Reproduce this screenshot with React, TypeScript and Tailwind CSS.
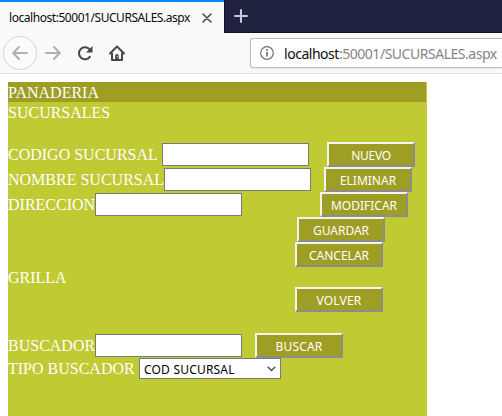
import React from 'react';

function Field({ label, labelClass }: { label: string; labelClass: string }) {
  return (
    <>
      <label className={`shrink-0 whitespace-nowrap ${labelClass}`}>{label}</label>
      <input aria-label={label} className="h-[23px] w-[147px] shrink-0 border border-[#7a7a7a] bg-white px-1 text-black outline-none" />
    </>
  );
}

function Action({ text, className, textClass }: { text: string; className: string; textClass: string }) {
  return (
    <button
      className={`flex h-[25px] w-[88px] shrink-0 items-center justify-center border-2 border-t-[#f4f4ee] border-r-[#8c8c8c] border-b-[#8c8c8c] border-l-[#f4f4ee] bg-[#9f9e24] pt-[3px] font-['Noto_Sans',sans-serif] text-[12px] leading-none text-white ${className}`}
    >
      <span className={`whitespace-nowrap ${textClass}`}>{text}</span>
    </button>
  );
}

function BrowserChrome() {
  return (
    <header className="font-['Noto_Sans','Open_Sans',sans-serif]">
      <div className="flex h-[33px] bg-[#202340]">
        <div className="flex w-[224px] shrink-0 items-center border-t-2 border-[#0a84ff] bg-[#f9f9fa] pl-[9px] text-[12px] text-[#0c0c0d]">
          <span className="w-[182px] shrink-0 whitespace-nowrap tracking-[-0.45px]">localhost:50001/SUCURSALES.aspx</span>
          <svg className="ml-[11px] shrink-0" width="10" height="10" viewBox="0 0 10 10" fill="none" stroke="#4a4a4f" strokeWidth="1.6" strokeLinecap="round">
            <path d="M1 1l8 8M9 1L1 9" />
          </svg>
        </div>
        <div className="flex flex-1 items-center border-b border-l border-[#11132a] pl-[9px]">
          <svg width="14" height="14" viewBox="0 0 14 14" fill="none" stroke="#c9c9d0" strokeWidth="2" strokeLinecap="round">
            <path d="M7 1v12M1 7h12" />
          </svg>
        </div>
      </div>
      <div className="flex h-[41px] items-center border-b border-[#dfdfe1] bg-[#f9f9fa]">
        <div className="ml-[3px] flex h-[34px] w-[34px] shrink-0 items-center justify-center rounded-full border border-[#d6d6d8] bg-[#fbfbfb]">
          <svg width="16" height="16" viewBox="0 0 16 16" fill="none" stroke="#b1b1b3" strokeWidth="2" strokeLinecap="round" strokeLinejoin="round">
            <path d="M15 8H1.5M7 2L1.2 8L7 14" />
          </svg>
        </div>
        <svg className="ml-[8px] shrink-0" width="16" height="16" viewBox="0 0 16 16" fill="none" stroke="#b1b1b3" strokeWidth="2" strokeLinecap="round" strokeLinejoin="round">
          <path d="M1 8h13.5M9 2l5.8 6L9 14" />
        </svg>
        <svg className="ml-[16px] shrink-0" width="16" height="16" viewBox="0 0 16 16" fill="none" stroke="#47474b" strokeWidth="2" strokeLinecap="round">
          <path d="M12.8 11.8A6 6 0 1 1 12.6 4.4" />
          <path d="M15.5 1v6.5H9z" fill="#47474b" stroke="none" />
        </svg>
        <svg className="ml-[16px] shrink-0" width="16" height="16" viewBox="0 0 16 16" fill="none" stroke="#47474b" strokeWidth="2" strokeLinecap="round" strokeLinejoin="round">
          <path d="M1 8.5l7-7l7 7M3 8.5V15h10V8.5" />
          <path d="M6.2 15v-4.2a1.8 1.8 0 0 1 3.6 0V15z" fill="#47474b" stroke="none" />
          <path d="M8.3 11.8h.3" stroke="#f9f9fa" strokeWidth="1" />
        </svg>
        <div className="ml-[125px] flex h-[30px] min-w-0 flex-1 items-center rounded-l-[3px] border border-r-0 border-[#bdbdbf] bg-white pl-[9px] shadow-[0_1px_2px_rgba(0,0,0,0.06)]">
          <svg className="shrink-0" width="14" height="14" viewBox="0 0 14 14" fill="none" stroke="#737373" strokeWidth="1.2">
            <circle cx="7" cy="7" r="6.3" />
            <path d="M7 6v4.5M7 3v1.7" strokeWidth="1.7" />
          </svg>
          <span className="ml-[10px] whitespace-nowrap pt-px text-[14px] tracking-[-0.47px] text-[#858588]">
            <span className="text-[#0c0c0d]">localhost</span>:50001/SUCURSALES.aspx
          </span>
        </div>
      </div>
    </header>
  );
}

export default function App() {
  return (
    <div className="h-[416px] w-[502px] overflow-hidden bg-white">
      <BrowserChrome />
      <main className="ml-[8px] mt-[8px] h-[334px] w-[419px] bg-[#c0ca33] font-['Liberation_Serif',serif] text-[16px] leading-[20px] text-white">
        <h1 className="h-[20px] w-[418px] bg-[#9f9e24] pt-px">PANADERIA</h1>
        <h2 className="h-[40px] pt-px">SUCURSALES</h2>
        <div className="flex h-[25px] items-center">
          <Field label="CODIGO SUCURSAL" labelClass="w-[154px]" />
          <Action text="NUEVO" className="ml-[18px]" textClass="tracking-[-0.3px]" />
        </div>
        <div className="flex h-[25px] items-center">
          <Field label="NOMBRE SUCURSAL" labelClass="w-[156px]" />
          <Action text="ELIMINAR" className="ml-[13px]" textClass="" />
        </div>
        <div className="flex h-[25px] items-center">
          <Field label="DIRECCION" labelClass="w-[87px]" />
          <Action text="MODIFICAR" className="ml-[78px]" textClass="" />
        </div>
        <Action text="GUARDAR" className="ml-[289px]" textClass="" />
        <Action text="CANCELAR" className="ml-[287px]" textClass="" />
        <h3 className="h-[20px] pt-px">GRILLA</h3>
        <Action text="VOLVER" className="ml-[287px]" textClass="tracking-[0.2px]" />
        <div className="mt-[21px] flex h-[25px] items-center">
          <Field label="BUSCADOR" labelClass="w-[87px]" />
          <Action text="BUSCAR" className="ml-[13px]" textClass="tracking-[0.2px]" />
        </div>
        <div className="flex h-[21px] items-center">
          <span className="w-[131px] whitespace-nowrap">TIPO BUSCADOR</span>
          <button className="flex h-[21px] w-[142px] items-center justify-between border border-[#7a7a7a] bg-white pl-[4px] pr-[4px] font-['Noto_Sans',sans-serif] text-[12px] leading-none text-black">
            <span className="whitespace-nowrap pt-[2px] tracking-[0.2px]">COD SUCURSAL</span>
            <svg width="9" height="6" viewBox="0 0 9 6" fill="none" stroke="#4a4a4a" strokeWidth="1.3">
              <path d="M.7 .8L4.5 4.5L8.3 .8" />
            </svg>
          </button>
        </div>
      </main>
    </div>
  );
}
